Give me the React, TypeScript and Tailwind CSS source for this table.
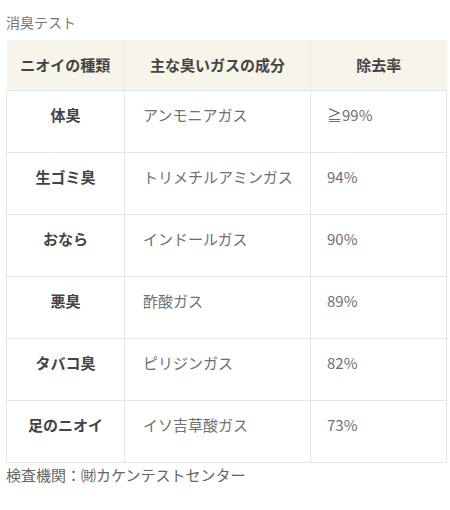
import React from "react";

const rows = [
  ["体臭", "アンモニアガス", "≧99%"],
  ["生ゴミ臭", "トリメチルアミンガス", "94%"],
  ["おなら", "インドールガス", "90%"],
  ["悪臭", "酢酸ガス", "89%"],
  ["タバコ臭", "ピリジンガス", "82%"],
  ["足のニオイ", "イソ吉草酸ガス", "73%"],
];

export default function App() {
  return (
    <div
      className="w-[450px] h-[510px] bg-white text-[#707070] text-[15px] leading-[1.5]"
      style={{ fontFamily: '"Noto Sans CJK JP", "Noto Sans", sans-serif' }}
    >
      <div className="pl-[6px] pt-[12px] h-[40px] text-[14px] text-[#777]">消臭テスト</div>
      <table className="ml-[6px] w-[440px] border-collapse table-fixed">
        <colgroup>
          <col className="w-[118px]" />
          <col className="w-[186px]" />
          <col className="w-[136px]" />
        </colgroup>
        <thead>
          <tr className="h-[50px] bg-[#f7f5e9]">
            <th className="font-bold text-[#444] text-center border-r border-[#eeede2]">ニオイの種類</th>
            <th className="font-bold text-[#444] text-center border-r border-[#eeede2]">主な臭いガスの成分</th>
            <th className="font-bold text-[#444] text-center">除去率</th>
          </tr>
        </thead>
        <tbody>
          {rows.map((r) => (
            <tr key={r[0]} className="h-[62px]">
              <td className="border border-[#e6e6e6] align-top pt-[13px] text-center font-bold text-[#444]">{r[0]}</td>
              <td className="border border-[#e6e6e6] align-top pt-[13px] pl-[18px]">{r[1]}</td>
              <td className="border border-[#e6e6e6] align-top pt-[13px] pl-[16px]">{r[2]}</td>
            </tr>
          ))}
        </tbody>
      </table>
      <div className="pl-[6px] pt-[1px] text-[15px] text-[#666]">検査機関：㈶カケンテストセンター</div>
    </div>
  );
}
